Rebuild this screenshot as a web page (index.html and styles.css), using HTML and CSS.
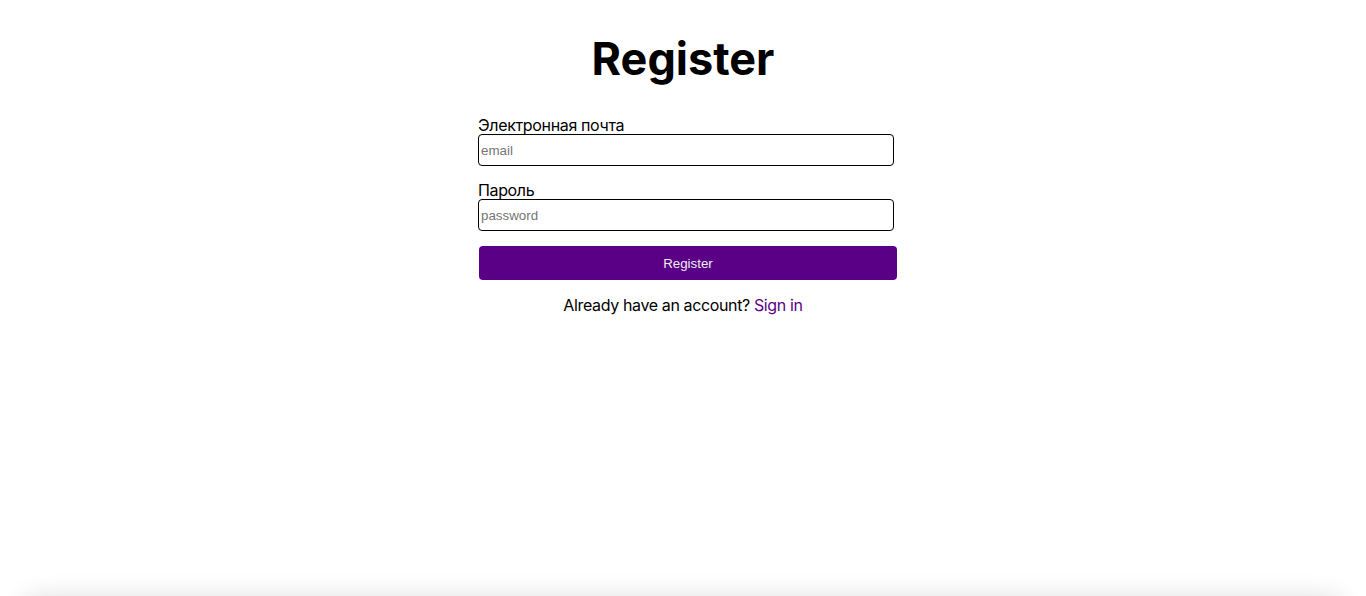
FILE: index.html
```html
<!DOCTYPE html>
<html lang="ru">
<head>
<meta charset="utf-8">
<title>Register</title>
<link rel="stylesheet" href="styles.css">
</head>
<body>
<main class="page">
  <h1 class="title">Register</h1>
  <form class="form">
    <label class="field">
      <span class="field-label">Электронная почта</span>
      <input class="field-input" type="email" placeholder="email">
    </label>
    <label class="field">
      <span class="field-label">Пароль</span>
      <input class="field-input" type="password" placeholder="password">
    </label>
    <button class="submit" type="button">Register</button>
    <p class="alt">Already have an account? <a class="alt-link" href="#">Sign in</a></p>
  </form>
</main>
<footer class="footer"></footer>
</body>
</html>
```
FILE: styles.css
```css
html, body {
  margin: 0;
  padding: 0;
  background: #fff;
}
body {
  font-family: Inter, "Noto Sans", sans-serif;
  color: #000;
  overflow: hidden;
}
.page {
  min-height: 596px;
  display: flex;
  flex-direction: column;
  align-items: center;
  padding-top: 32px;
  box-sizing: border-box;
}
.title {
  margin: 0;
  font-size: 45px;
  font-weight: 700;
  line-height: 54px;
}
.form {
  width: 410px;
  margin-top: 29px;
  display: flex;
  flex-direction: column;
}
.field {
  display: flex;
  flex-direction: column;
  margin-bottom: 14px;
}
.field + .field {
  margin-bottom: 15px;
}
.field-label {
  font-size: 16px;
  line-height: 19px;
  letter-spacing: -0.35px;
  padding-top: 1px;
  margin-bottom: -1px;
}
.field-input {
  width: 100%;
  box-sizing: content-box;
  height: 26px;
  padding: 2px 2px;
  margin: 0;
  border: 1px solid #000;
  border-radius: 4px;
  font-family: "Liberation Sans", Arial, sans-serif;
  font-size: 13.33px;
  color: #000;
  outline: none;
}
.field-input::placeholder {
  color: #757575;
}
.submit {
  width: 418px;
  height: 34px;
  margin: 0 0 0 1px;
  border: none;
  border-radius: 4px;
  background: #5a0087;
  color: #eee;
  font-family: "Liberation Sans", Arial, sans-serif;
  font-size: 13.33px;
  cursor: pointer;
}
.alt {
  margin: 16px 0 0;
  text-align: center;
  font-size: 16px;
  line-height: 19px;
  letter-spacing: -0.37px;
}
.alt-link {
  color: #5a0087;
  text-decoration: none;
}
.footer {
  height: 60px;
  margin: 0 22px;
  border-radius: 16px;
  box-shadow: 0 0 24px rgba(0, 0, 0, 0.12);
}
```
